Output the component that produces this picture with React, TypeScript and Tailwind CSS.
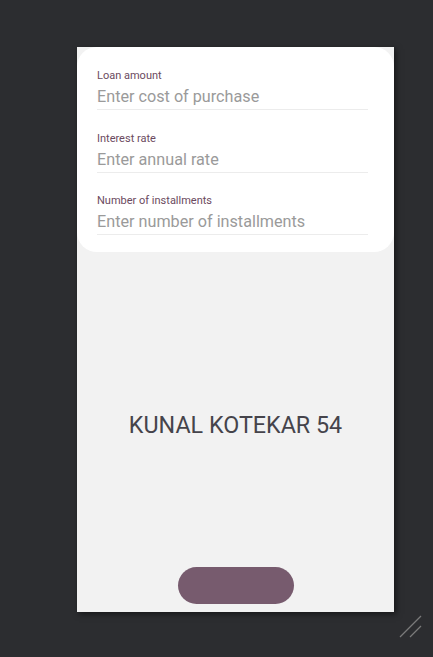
import React from "react";

const fields = [
  { label: "Loan amount", placeholder: "Enter cost of purchase" },
  { label: "Interest rate", placeholder: "Enter annual rate" },
  { label: "Number of installments", placeholder: "Enter number of installments" },
];

export default function App() {
  return (
    <div
      className="relative w-[433px] h-[657px] bg-[#2c2d30] overflow-hidden"
      style={{ fontFamily: "Roboto, 'Noto Sans', sans-serif" }}
    >
      <div className="absolute left-[77px] top-[47px] w-[317px] h-[565px] bg-[#f2f2f2] flex flex-col shadow-[2px_2px_6px_rgba(0,0,0,0.5)]">
        {/* input card */}
        <div className="bg-white rounded-[20px] pl-[20px] pr-[26px] pt-[22px] pb-[17px] flex flex-col gap-[21.5px]">
          {fields.map((f) => (
            <div key={f.label} className="flex flex-col">
              <span className="text-[11px] leading-[14px] text-[#6b4a60]">{f.label}</span>
              <input
                placeholder={f.placeholder}
                className="mt-[1px] h-[26px] text-[16.2px] text-[#333] placeholder:text-[#9a9a9a] outline-none border-b border-[#ececec] bg-transparent"
              />
            </div>
          ))}
        </div>

        <div className="flex-1 flex items-center justify-center pt-[31px]">
          <span className="text-[23.3px] text-[#45444b]">KUNAL KOTEKAR 54</span>
        </div>

        <div className="flex justify-center pb-[8px]">
          <button className="w-[116px] h-[37px] rounded-full bg-[#775b6e]" />
        </div>
      </div>

      {/* resize grip */}
      <svg className="absolute left-[398px] top-[614px]" width="26" height="26" viewBox="0 0 26 26">
        <line x1="2" y1="23" x2="23" y2="2" stroke="#7a7a7a" strokeWidth="1.2" />
        <line x1="12" y1="23" x2="23" y2="12" stroke="#7a7a7a" strokeWidth="1.2" />
      </svg>
    </div>
  );
}
